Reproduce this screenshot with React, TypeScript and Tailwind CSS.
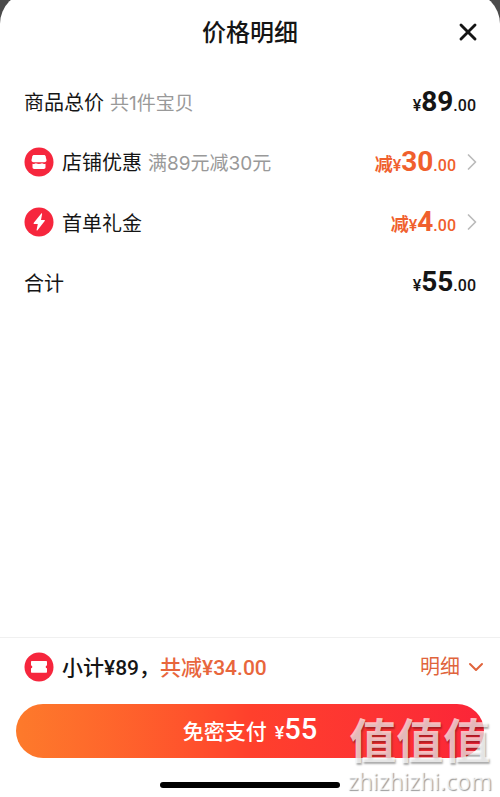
import React from "react";
import { X, ChevronRight, ChevronDown } from "lucide-react";

const ShopIcon = () => (
  <svg viewBox="0 0 30 30" className="size-[30px] shrink-0" aria-hidden="true">
    <circle cx="15" cy="15" r="14.5" fill="#f6263d" />
    <path
      d="M10.2 8h9.6c1 0 1.5.5 1.8 1.3l.9 3.7c.1 1.3-.7 2.2-2 2.2h-11c-1.300 0-2.100-.9-2-2.200l.9-3.700C8.700 8.500 9.200 8 10.200 8Z"
      fill="#fff"
    />
    <path
      d="M8.500 16.800c1.200.5 2.300.3 3.300-.5 1.900 1 4.300 1 6.300 0 1 .8 2.200 1 3.400.5v3.400c0 1-.7 1.700-1.700 1.700h-9.600c-1 0-1.700-.7-1.700-1.700Z"
      fill="#fff"
    />
  </svg>
);

const BoltIcon = () => (
  <svg viewBox="0 0 30 30" className="size-[30px] shrink-0" aria-hidden="true">
    <circle cx="15" cy="15" r="14.5" fill="#f6263d" />
    <path
      d="M17.300 6.500 9.600 16c-.3.500 0 .9.500.9h3.700L12.600 23c0 .6.500.7.900.2l7.200-9.200c.4-.5.1-1-.5-1h-3.200l1.100-6.100c.1-.6-.4-.8-.8-.4Z"
      fill="#fff"
    />
  </svg>
);

const CouponIcon = () => (
  <svg viewBox="0 0 30 30" className="size-[30px] shrink-0" aria-hidden="true">
    <circle cx="15" cy="15" r="14.5" fill="#f6263d" />
    <path
      d="M8 9h14c.6 0 1 .4 1 1v3.600a1.300 1.300 0 0 0 0 2.600v3.600c0 .6-.4 1-1 1H8c-.6 0-1-.4-1-1v-3.600a1.300 1.300 0 0 0 0-2.600V10c0-.6.4-1 1-1Z"
      fill="#fff"
    />
  </svg>
);

type Row = {
  label: string;
  note?: string;
  icon?: React.ReactNode;
  amount: string;
  discount?: boolean;
};

const rows: Row[] = [
  { label: "商品总价", note: "共1件宝贝", amount: "89" },
  { label: "店铺优惠", note: "满89元减30元", icon: <ShopIcon />, amount: "30", discount: true },
  { label: "首单礼金", icon: <BoltIcon />, amount: "4", discount: true },
  { label: "合计", amount: "55" },
];

const PriceRow = ({ label, note, icon, amount, discount }: Row) => {
  const price = (
    <span className="flex items-baseline font-medium">
      {discount && <span className="text-lg font-bold">减</span>}
      <span className="text-base">¥</span>
      <span className="text-[28px] leading-9 font-bold">{amount}</span>
      <span className="text-base">.00</span>
    </span>
  );

  return (
    <li className="flex h-[60px] items-center justify-between">
      <div className="flex items-center gap-2">
        {icon}
        <div className="flex items-baseline gap-1.5 pt-1">
          <span className="text-xl">{label}</span>
          {note && (
            <span className="font-[Inter,'Noto_Sans_CJK_SC',sans-serif] text-[19px] text-[#999]">
              {note}
            </span>
          )}
        </div>
      </div>
      {discount ? (
        <button type="button" className="flex items-center gap-0.5 text-[#f0602d]">
          {price}
          <ChevronRight className="-mr-2.5 size-7 text-[#bbb]" strokeWidth={1.5} />
        </button>
      ) : (
        price
      )}
    </li>
  );
};

const App = () => {
  return (
    <div className="flex min-h-screen flex-col overflow-hidden bg-[#4b4b4b] font-[Roboto,'Noto_Sans_CJK_SC',sans-serif] text-[#151515]">
      <main className="relative -mt-2 flex flex-1 flex-col rounded-t-[32px] bg-white pt-2">
        <header className="relative flex h-16 items-center justify-center">
          <h1 className="pt-0.5 text-2xl font-medium">价格明细</h1>
          <button type="button" aria-label="关闭" className="absolute right-4.5">
            <X className="size-7" strokeWidth={2.5} />
          </button>
        </header>

        <ul className="flex-1 px-6 pt-2">
          {rows.map((row) => (
            <PriceRow key={row.label} {...row} />
          ))}
        </ul>

        <footer className="border-t border-[#f0f0f0] pb-[9px]">
          <div className="flex h-[58px] items-center justify-between pr-3 pl-6">
            <div className="flex items-center gap-2 text-[21px] font-medium">
              <CouponIcon />
              <p className="pt-1">
                <span>小计¥89，</span>
                <span className="text-[#e8663c]">共减¥34.00</span>
              </p>
            </div>
            <button type="button" className="flex items-center gap-1 text-xl text-[#e0643c]">
              明细
              <ChevronDown className="size-6" strokeWidth={2} />
            </button>
          </div>

          <div className="px-4 pt-2">
            <button
              type="button"
              className="flex h-[54px] w-full items-baseline justify-center rounded-full bg-linear-to-r from-[#fd7a2b] via-[#ff402c] to-[#fb2438] font-medium text-white"
            >
              <span className="text-[21px]">免密支付</span>
              <span className="ml-2 text-lg">¥</span>
              <span className="text-[29px] leading-[50px]">55</span>
            </button>
          </div>

          <div className="mx-auto mt-6 h-[6px] w-[180px] rounded-full bg-black" />
        </footer>

        <div className="pointer-events-none absolute right-2 bottom-0.5 flex flex-col items-center text-white/70">
          <span className="text-[47px] leading-[50px] font-bold [text-shadow:1px_2px_2px_#0005]">
            值值值
          </span>
          <span className="font-['Open_Sans',sans-serif] text-[23px] leading-7 [text-shadow:1px_1px_1px_#0006]">
            zhizhizhi.com
          </span>
        </div>
      </main>
    </div>
  );
};

export default App;
